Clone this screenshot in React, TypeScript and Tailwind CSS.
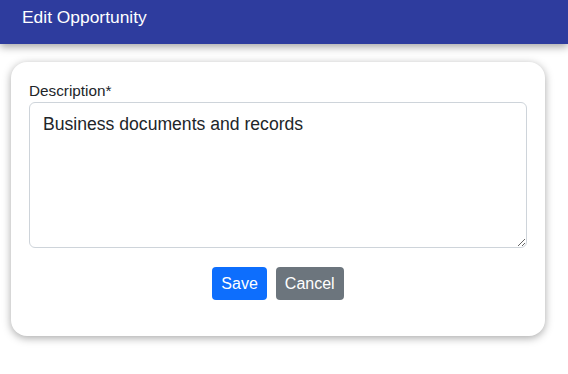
import * as React from "react"

const App: React.FC = () => {
  return (
    <div className="min-h-[374px] w-full bg-white font-['Liberation_Sans',Arial,sans-serif]">
      {/* Header */}
      <div className="relative z-10 flex h-[44px] items-start bg-[#2e3c9e] px-[22px] pt-[6px] shadow-[0_3px_8px_rgba(0,0,0,0.35)]">
        <h1 className="text-[17.4px] leading-[22px] text-white">Edit Opportunity</h1>
      </div>

      <div className="pl-[11px] pr-[23px] pt-[18px]">
        <div className="rounded-[16px] bg-white px-[18px] pb-[36px] pt-[20px] shadow-[0_2px_8px_rgba(0,0,0,0.35)]">
          <label className="mb-[2px] block text-[15.3px] leading-[18px] text-[#212529]">Description*</label>
          <textarea
            defaultValue="Business documents and records"
            className="block h-[146px] w-full resize-y rounded-[6px] border border-[#ced4da] px-[13px] pb-[10px] pt-[9px] text-[17.6px] leading-[24px] text-[#212529] outline-none"
          />
          <div className="mt-[19px] flex justify-center gap-[9px]">
            <button className="h-[33px] rounded-[4px] bg-[#0d6efd] px-[9px] text-[16px] text-white">Save</button>
            <button className="h-[33px] rounded-[4px] bg-[#6c757d] px-[9px] text-[16px] text-white">Cancel</button>
          </div>
        </div>
      </div>
    </div>
  )
}

export default App
